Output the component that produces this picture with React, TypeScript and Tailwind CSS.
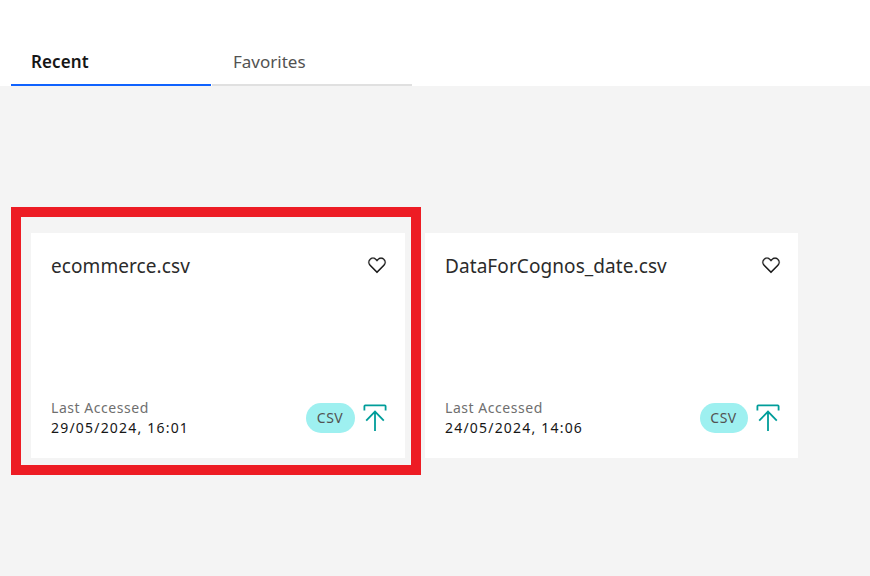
type Asset = { name: string; accessed: string };

const assets: Asset[] = [
  { name: 'ecommerce.csv', accessed: '29/05/2024, 16:01' },
  { name: 'DataForCognos_date.csv', accessed: '24/05/2024, 14:06' },
];

function HeartIcon() {
  return (
    <svg className="mt-px size-5" viewBox="0 0 32 32" fill="#161616" stroke="#161616" strokeWidth="0.3">
      <path d="M22.45,6a5.47,5.47,0,0,1,3.91,1.64,5.7,5.7,0,0,1,0,8L16,26.13,5.64,15.64a5.7,5.7,0,0,1,0-8,5.48,5.48,0,0,1,7.82,0L16,10.24l2.53-2.58A5.44,5.44,0,0,1,22.45,6m0-2a7.47,7.47,0,0,0-5.34,2.24L16,7.36,14.89,6.24a7.49,7.49,0,0,0-10.68,0,7.72,7.72,0,0,0,0,10.82L16,29,27.79,17.06a7.72,7.72,0,0,0,0-10.82A7.49,7.49,0,0,0,22.45,4Z" />
    </svg>
  );
}

function UploadIcon() {
  return (
    <svg className="h-7 w-6" viewBox="0 0 24 28" fill="none" stroke="#009d9a" strokeWidth="1.8">
      <path d="M1.4 7.5V3.2Q1.4 2.4 2.2 2.4H21.8Q22.6 2.4 22.6 3.2V7.5" />
      <path d="M12 28V9M3.2 17.6L12 8.6L20.8 17.6" />
    </svg>
  );
}

function AssetCard({ asset }: { asset: Asset }) {
  return (
    <article className="group flex h-[225px] flex-col justify-between bg-white pt-[21px] pr-[17px] pb-5 pl-5 first:w-[374px] last:w-[373px]">
      <div className="flex items-start justify-between">
        <h2 className="text-[19px] leading-6 font-normal tracking-[0.08px] text-[#2b2b2b]">{asset.name}</h2>
        <div className="pr-px group-last:pr-0">
          <HeartIcon />
        </div>
      </div>
      <div className="flex items-end">
        <div className="flex-1 text-sm leading-5">
          <p className="tracking-[0.54px] text-[#6f6f6f]">Last Accessed</p>
          <p className="tracking-[1.2px]">{asset.accessed}</p>
        </div>
        <span className="mr-2 mb-[5px] flex h-[30px] w-[49px] items-center justify-center rounded-full bg-[#9ef0f0] pr-px text-sm tracking-[0.5px] text-[#525252] group-last:w-12">
          CSV
        </span>
        <div className="mr-px mb-[7px]">
          <UploadIcon />
        </div>
      </div>
    </article>
  );
}

export default function App() {
  return (
    <main className="relative h-[576px] w-[870px] overflow-hidden bg-[#f4f4f4] font-['Noto_Sans',sans-serif] text-[#161616]">
      <nav className="flex h-[86px] items-end gap-px bg-white pl-[11px] text-[17px]">
        <button className="h-[47px] w-[200px] border-b-2 border-[#0f62fe] pl-5 text-left font-semibold tracking-[0.1px]">Recent</button>
        <button className="h-[47px] w-[200px] border-b-2 border-[#e0e0e0] pl-[21px] text-left text-[#525252]">Favorites</button>
      </nav>
      <section className="flex gap-5 pt-[147px] pl-[31px]">
        {assets.map((asset) => (
          <AssetCard key={asset.name} asset={asset} />
        ))}
      </section>
      <div className="pointer-events-none absolute top-[207px] left-[11px] h-[268px] w-[410px] border-[10px] border-[#ed1c24]" />
    </main>
  );
}
